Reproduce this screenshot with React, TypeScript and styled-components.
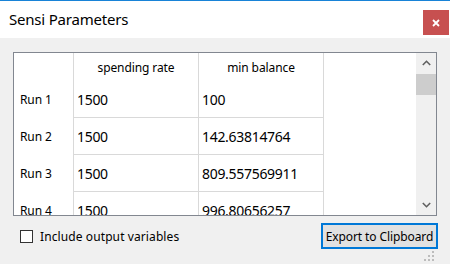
import React from "react";
import styled, { createGlobalStyle } from "styled-components";

const GlobalStyle = createGlobalStyle`
  html, body {
    margin: 0;
    padding: 0;
    background: #f0f0f0;
  }
  body {
    font-family: "Noto Sans", "Open Sans", sans-serif;
    color: #000;
  }
`;

const Window = styled.div`
  width: 450px;
  height: 264px;
  display: flex;
  flex-direction: column;
  background: #f0f0f0;
  border-top: 1px solid #1883d7;
  box-sizing: border-box;
  overflow: hidden;
`;

const TitleBar = styled.div`
  height: 37px;
  flex: none;
  background: #fff;
  display: flex;
  align-items: center;
  justify-content: space-between;
  padding-left: 9px;
`;

const Title = styled.div`
  font-size: 15px;
  letter-spacing: -0.2px;
  margin-top: -2px;
`;

const CloseButton = styled.div`
  width: 26px;
  height: 25px;
  margin-right: 1px;
  margin-top: 6px;
  background: #c75050;
  display: flex;
  align-items: center;
  justify-content: center;
`;

const Body = styled.div`
  flex: 1;
  display: flex;
  flex-direction: column;
  padding: 14px 13px 0 13px;
`;

const GridBox = styled.div`
  width: 424px;
  height: 164px;
  box-sizing: border-box;
  border: 1px solid #828790;
  background: #fff;
  display: flex;
  overflow: hidden;
`;

const TableArea = styled.div`
  flex: 1;
  overflow: hidden;
`;

const Row = styled.div<{ $header?: boolean }>`
  display: grid;
  grid-template-columns: 60px 125px 125px;
  height: ${({ $header }) => ($header ? "28px" : "37px")};
`;

const HeadCorner = styled.div`
  border-right: 1px solid #d9d9d9;
`;

const HeadCell = styled.div`
  border-right: 1px solid #d9d9d9;
  font-size: 12px;
  display: flex;
  justify-content: center;
  align-items: center;
  letter-spacing: -0.1px;
`;

const RowLabel = styled.div`
  border-right: 1px solid #d9d9d9;
  font-size: 12px;
  display: flex;
  align-items: center;
  padding-left: 6px;
  letter-spacing: -0.1px;
`;

const Cell = styled.div`
  border-right: 1px solid #d9d9d9;
  border-bottom: 1px solid #d9d9d9;
  font-size: 14px;
  display: flex;
  align-items: center;
  padding-left: 3px;
  letter-spacing: -0.3px;
`;

const ScrollBar = styled.div`
  width: 20px;
  flex: none;
  background: #f0f0f0;
  display: flex;
  flex-direction: column;
`;

const ScrollArrow = styled.div`
  height: 20px;
  display: flex;
  align-items: center;
  justify-content: center;
`;

const ScrollThumb = styled.div`
  height: 21px;
  margin-top: 1px;
  background: #cdcdcd;
`;

const ScrollTrack = styled.div`
  flex: 1;
`;

const Footer = styled.div`
  display: flex;
  align-items: center;
  justify-content: space-between;
  margin-top: 8px;
  width: 424px;
`;

const CheckLabel = styled.label`
  display: flex;
  align-items: center;
  gap: 7px;
  margin-left: 7px;
  margin-top: -1px;
  font-size: 12px;
  letter-spacing: 0.1px;
`;

const CheckBox = styled.span`
  width: 13px;
  height: 13px;
  border: 1px solid #333;
  background: #fff;
  box-sizing: border-box;
  display: inline-block;
`;

const ExportButton = styled.button`
  width: 117px;
  height: 26px;
  box-sizing: border-box;
  border: 2px solid #0078d7;
  background: #e1e1e1;
  font-family: "Noto Sans", "Open Sans", sans-serif;
  font-size: 12px;
  letter-spacing: -0.1px;
  padding: 0;
  color: #000;
  margin-right: -1px;
  margin-top: -1px;
`;

const GripRow = styled.div`
  display: flex;
  justify-content: flex-end;
  padding-right: 2px;
  margin-top: 2px;
`;

const rows = [
  ["Run 1", "1500", "100"],
  ["Run 2", "1500", "142.63814764"],
  ["Run 3", "1500", "809.557569911"],
  ["Run 4", "1500", "996.80656257"],
];

const Chevron: React.FC<{ up?: boolean }> = ({ up }) => (
  <svg width="9" height="6" viewBox="0 0 9 6">
    <path
      d={up ? "M0.8 5 L4.5 1.3 L8.2 5" : "M0.8 1 L4.5 4.7 L8.2 1"}
      stroke="#606060"
      strokeWidth="1.6"
      fill="none"
    />
  </svg>
);

export default function App() {
  return (
    <>
      <GlobalStyle />
      <Window>
        <TitleBar>
          <Title>Sensi Parameters</Title>
          <CloseButton>
            <svg width="8" height="8" viewBox="0 0 8 8">
              <path d="M1 1 L7 7 M7 1 L1 7" stroke="#fff" strokeWidth="1.8" />
            </svg>
          </CloseButton>
        </TitleBar>
        <Body>
          <GridBox>
            <TableArea>
              <Row $header>
                <HeadCorner />
                <HeadCell>spending rate</HeadCell>
                <HeadCell>min balance</HeadCell>
              </Row>
              {rows.map((r) => (
                <Row key={r[0]}>
                  <RowLabel>{r[0]}</RowLabel>
                  <Cell>{r[1]}</Cell>
                  <Cell>{r[2]}</Cell>
                </Row>
              ))}
            </TableArea>
            <ScrollBar>
              <ScrollArrow>
                <Chevron up />
              </ScrollArrow>
              <ScrollThumb />
              <ScrollTrack />
              <ScrollArrow>
                <Chevron />
              </ScrollArrow>
            </ScrollBar>
          </GridBox>
          <Footer>
            <CheckLabel>
              <CheckBox />
              Include output variables
            </CheckLabel>
            <ExportButton>Export to Clipboard</ExportButton>
          </Footer>
          <GripRow>
            <svg width="11" height="11" viewBox="0 0 11 11">
              {[
                [8, 0],
                [4, 4],
                [8, 4],
                [0, 8],
                [4, 8],
                [8, 8],
              ].map(([x, y]) => (
                <rect key={`${x}-${y}`} x={x} y={y} width="2" height="2" fill="#bcbcbc" />
              ))}
            </svg>
          </GripRow>
        </Body>
      </Window>
    </>
  );
}
